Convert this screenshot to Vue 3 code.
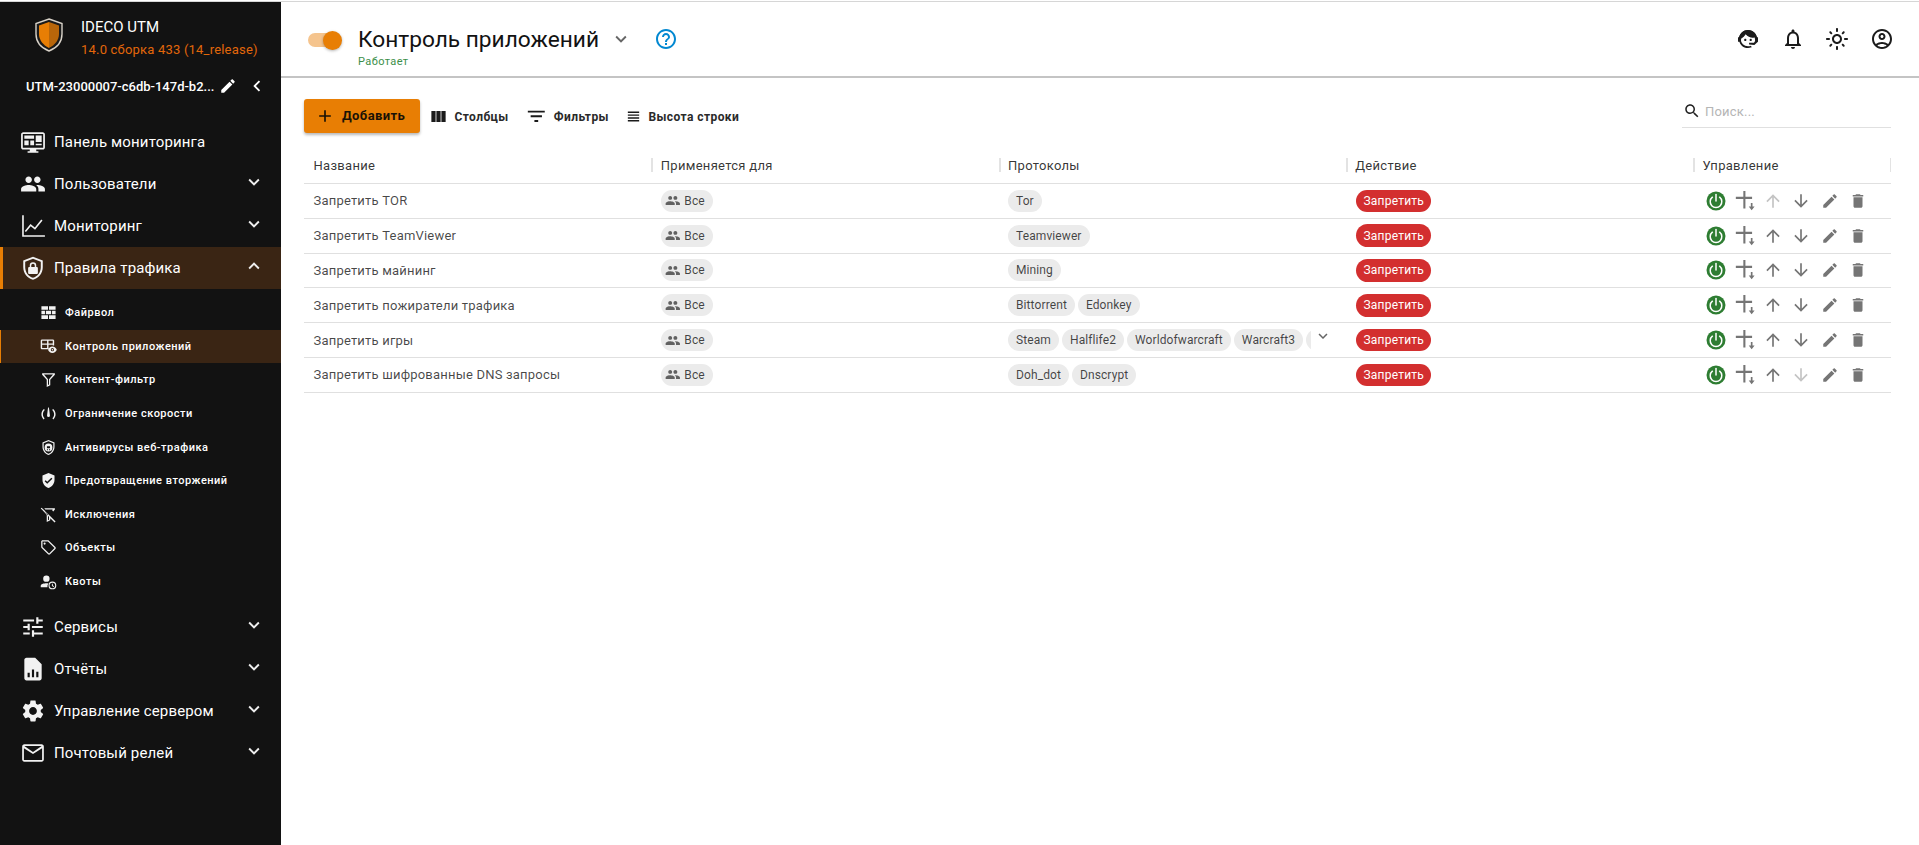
<script setup>
const P = {
  people: 'M16 11c1.66 0 2.99-1.34 2.99-3S17.66 5 16 5c-1.66 0-3 1.34-3 3s1.34 3 3 3zm-8 0c1.66 0 2.99-1.34 2.99-3S9.66 5 8 5C6.34 5 5 6.34 5 8s1.34 3 3 3zm0 2c-2.33 0-7 1.17-7 3.5V19h14v-2.5c0-2.33-4.67-3.5-7-3.5zm8 0c-.29 0-.62.02-.97.05 1.16.84 1.97 1.97 1.97 3.45V19h6v-2.5c0-2.33-4.67-3.5-7-3.5z',
  monitor: 'M21 3H3c-1.1 0-2 .9-2 2v12c0 1.1.9 2 2 2h6v1.5H7V22h10v-1.5h-2V19h6c1.1 0 2-.9 2-2V5c0-1.1-.9-2-2-2zm.4 14.4H2.6V4.6h18.8v12.8zM4 6h9v3H4zm10.5 0H20v6h-5.5zM4 10.5h4V15H4zm5.5 0H13V15H9.5zm5 3H20V15h-5.5z',
  chart: 'M2 2h1.5v18.5H23V22H2zM5.5 17.5l-1.1-1 5.3-6.3 4 3.2 5.9-7.3 1.2.9-6.9 8.5-4-3.2z',
  shieldlock: 'M12 1.6 3 5v6.3c0 5.4 3.8 10.2 9 11.5 5.200-1.300 9-6.100 9-11.500V5l-9-3.400zm7.200 9.700c0 4.500-3 8.600-7.200 9.800-4.200-1.200-7.200-5.300-7.200-9.800V6.300L12 3.500l7.200 2.800v5zM15.500 11H15V9.600a3 3 0 0 0-6 0V11h-.5a1 1 0 0 0-1 1v4.500a1 1 0 0 0 1 1h7a1 1 0 0 0 1-1V12a1 1 0 0 0-1-1zm-1.900 0h-3.200V9.600a1.600 1.600 0 0 1 3.200 0V11z',
  tune: 'M3 17v2h6v-2H3zM3 5v2h10V5H3zm10 16v-2h8v-2h-8v-2h-2v6h2zM7 9v2H3v2h4v2h2V9H7zm14 4v-2H11v2h10zm-6-4h2V7h4V5h-4V3h-2v6z',
  report: 'M14 1.500H6c-1.100 0-2 .9-2 2v17c0 1.100.9 2 2 2h12c1.100 0 2-.9 2-2V7.500l-6-6zM9 19.500H7v-4h2v4zm4 0h-2v-7h2v7zm4 0h-2v-5h2v5z',
  gear: 'M19.140 12.940c.04-.3.06-.61.06-.94 0-.32-.02-.64-.07-.94l2.030-1.580c.18-.14.23-.41.12-.61l-1.920-3.320c-.12-.22-.37-.29-.59-.22l-2.390.96c-.5-.38-1.030-.7-1.620-.94l-.36-2.540c-.04-.24-.24-.41-.48-.41h-3.840c-.24 0-.43.17-.47.41l-.36 2.540c-.59.24-1.130.57-1.620.94l-2.390-.96c-.22-.08-.47 0-.59.22L2.740 8.870c-.12.21-.08.47.12.61l2.030 1.580c-.05.3-.09.63-.09.94s.02.64.07.94l-2.030 1.580c-.18.14-.23.41-.12.61l1.920 3.320c.12.22.37.29.59.22l2.390-.96c.5.38 1.030.7 1.620.94l.36 2.540c.05.24.24.41.48.41h3.840c.24 0 .44-.17.47-.41l.36-2.540c.59-.24 1.130-.56 1.620-.94l2.390.96c.22.08.47 0 .59-.22l1.920-3.320c.12-.22.07-.47-.12-.61l-2.010-1.580zM12 15.600c-1.980 0-3.600-1.620-3.600-3.600s1.620-3.600 3.600-3.600 3.600 1.620 3.600 3.600-1.620 3.600-3.600 3.600z',
  mail: 'M20 4H4c-1.100 0-1.990.9-1.990 2L2 18c0 1.100.9 2 2 2h16c1.100 0 2-.9 2-2V6c0-1.100-.9-2-2-2zm.4 14.400H3.600V7.600l8.400 5.400 8.400-5.400v10.800zM12 11 4 5.600h16L12 11z',
  down: 'M7.410 8.590 12 13.170l4.590-4.580L18 10l-6 6-6-6 1.410-1.410z',
  up: 'M7.410 15.410 12 10.830l4.590 4.580L18 14l-6-6-6 6z',
  left: 'M15.410 7.410 14 6l-6 6 6 6 1.410-1.410L10.830 12z',
  edit: 'M3 17.250V21h3.750L17.810 9.940l-3.750-3.750L3 17.250zM20.710 7.040c.39-.39.39-1.020 0-1.410l-2.340-2.340c-.39-.39-1.020-.39-1.410 0l-1.830 1.830 3.750 3.750 1.830-1.830z',
  trash: 'M6 19c0 1.100.9 2 2 2h8c1.100 0 2-.9 2-2V7H6v12zM19 4h-3.500l-1-1h-5l-1 1H5v2h14V4z',
  arrowUp: 'M4 12l1.410 1.410L11 7.830V20h2V7.830l5.580 5.590L20 12l-8-8-8 8z',
  arrowDown: 'M20 12l-1.410-1.410L13 16.170V4h-2v12.170l-5.580-5.590L4 12l8 8 8-8z',
  search: 'M15.500 14h-.79l-.28-.27C15.410 12.590 16 11.110 16 9.500 16 5.910 13.090 3 9.500 3S3 5.910 3 9.500 5.910 16 9.500 16c1.610 0 3.090-.59 4.230-1.570l.27.28v.79l5 4.990L20.490 19l-4.990-5zm-6 0C7.010 14 5 11.990 5 9.500S7.010 5 9.500 5 14 7.010 14 9.500 11.990 14 9.500 14z',
  columns: 'M14.670 5v14H9.330V5h5.340zm1 14H21V5h-5.330v14zm-7.340 0V5H3v14h5.330z',
  filter: 'M10 18h4v-2h-4v2zM3 6v2h18V6H3zm3 7h12v-2H6v2z',
  density: 'M4 15h16v-2H4v2zm0 4h16v-2H4v2zm0-8h16V9H4v2zm0-6v2h16V5H4z',
  plus: 'M19 13h-6v6h-2v-6H5v-2h6V5h2v6h6v2z',
  help: 'M11 18h2v-2h-2v2zm1-16C6.480 2 2 6.480 2 12s4.480 10 10 10 10-4.480 10-10S17.520 2 12 2zm0 18c-4.410 0-8-3.590-8-8s3.590-8 8-8 8 3.590 8 8-3.590 8-8 8zm0-14c-2.210 0-4 1.790-4 4h2c0-1.100.9-2 2-2s2 .9 2 2c0 2-3 1.750-3 5h2c0-2.250 3-2.500 3-5 0-2.210-1.790-4-4-4z',
  bell: 'M12 22c1.100 0 2-.9 2-2h-4c0 1.100.9 2 2 2zm6-6v-5c0-3.070-1.630-5.640-4.500-6.320V4c0-.83-.67-1.500-1.500-1.500s-1.500.67-1.500 1.500v.68C7.640 5.360 6 7.920 6 11v5l-2 2v1h16v-1l-2-2zm-2 1H8v-6c0-2.480 1.510-4.500 4-4.500s4 2.020 4 4.500v6z',
  sun: 'M12 9c1.650 0 3 1.350 3 3s-1.350 3-3 3-3-1.350-3-3 1.350-3 3-3m0-2c-2.760 0-5 2.240-5 5s2.240 5 5 5 5-2.240 5-5-2.240-5-5-5zM2 13h2c.55 0 1-.45 1-1s-.45-1-1-1H2c-.55 0-1 .45-1 1s.45 1 1 1zm18 0h2c.55 0 1-.45 1-1s-.45-1-1-1h-2c-.55 0-1 .45-1 1s.45 1 1 1zM11 2v2c0 .55.45 1 1 1s1-.45 1-1V2c0-.55-.45-1-1-1s-1 .45-1 1zm0 18v2c0 .55.45 1 1 1s1-.45 1-1v-2c0-.55-.45-1-1-1s-1 .45-1 1zM5.990 4.580c-.39-.39-1.030-.39-1.410 0-.39.39-.39 1.030 0 1.410l1.060 1.060c.39.39 1.030.39 1.410 0s.39-1.030 0-1.410L5.990 4.580zm12.370 12.370c-.39-.39-1.030-.39-1.410 0-.39.39-.39 1.030 0 1.410l1.060 1.060c.39.39 1.030.39 1.410 0 .39-.39.39-1.030 0-1.410l-1.060-1.060zm1.060-10.960c.39-.39.39-1.030 0-1.410-.39-.39-1.030-.39-1.410 0l-1.060 1.060c-.39.39-.39 1.030 0 1.410s1.030.39 1.410 0l1.060-1.060zM7.050 18.360c.39-.39.39-1.030 0-1.410-.39-.39-1.030-.39-1.410 0l-1.060 1.060c-.39.39-.39 1.030 0 1.410s1.030.39 1.410 0l1.060-1.060z',
  account: 'M12 2C6.480 2 2 6.480 2 12s4.480 10 10 10 10-4.480 10-10S17.520 2 12 2zM7.350 18.500C8.660 17.560 10.260 17 12 17s3.340.56 4.650 1.500c-1.310.94-2.910 1.500-4.650 1.500s-3.340-.56-4.650-1.500zm10.790-1.380C16.450 15.800 14.320 15 12 15s-4.450.8-6.140 2.120C4.700 15.730 4 13.950 4 12c0-4.420 3.580-8 8-8s8 3.580 8 8c0 1.950-.7 3.730-1.860 5.120zM12 6c-1.930 0-3.500 1.570-3.500 3.500S10.070 13 12 13s3.500-1.570 3.500-3.500S13.930 6 12 6zm0 5c-.83 0-1.500-.67-1.500-1.500S11.170 8 12 8s1.500.67 1.500 1.500S12.830 11 12 11z',
  hair: 'M12 3C7.500 3 4.200 6.200 3 10.500V13.500H4.700C5 12.500 5.300 11.700 5.500 11.300 7.300 10.300 8.800 8.800 9.700 7.300 11.500 9.500 14 10.700 17 10.700 17.800 10.700 18.200 10.700 18.700 10.600 19 11.500 19 12.500 19 13.500H21V10.500C19.800 6.200 16.500 3 12 3Z',
  agent: 'M18.720 14.760C19.070 13.910 19.260 13 19.260 12C19.260 11.280 19.150 10.590 18.960 9.950C18.310 10.100 17.630 10.180 16.920 10.180C13.860 10.180 11.150 8.670 9.500 6.340C8.610 8.500 6.910 10.260 4.770 11.220C4.730 11.470 4.730 11.740 4.730 12A7.270 7.270 0 0 0 12 19.270C13.050 19.270 14.060 19.040 14.970 18.630C15.540 19.720 15.800 20.260 15.780 20.260C14.140 20.810 12.870 21.080 12 21.080C9.580 21.080 7.270 20.130 5.570 18.420C4.530 17.380 3.760 16.110 3.330 14.730H2V10.180H3.090C3.930 6.040 7.600 2.920 12 2.920C14.400 2.920 16.710 3.870 18.420 5.580C19.690 6.840 20.540 8.450 20.890 10.180H22V14.730H21.940L18.380 18L13.080 17.400V15.730H17.910L18.720 14.760M9.270 11.770C9.570 11.770 9.860 11.890 10.070 12.110C10.280 12.320 10.400 12.610 10.400 12.910C10.400 13.210 10.280 13.500 10.070 13.710C9.860 13.920 9.570 14.040 9.270 14.040C8.640 14.040 8.130 13.540 8.130 12.910C8.130 12.280 8.640 11.770 9.270 11.770M14.720 11.770C15.350 11.770 15.850 12.280 15.850 12.910C15.850 13.540 15.350 14.040 14.720 14.040C14.090 14.040 13.580 13.540 13.580 12.910A1.140 1.140 0 0 1 14.720 11.770Z',
  bricks: 'M2 3h9.300v5H2zM12.700 3H22v5h-9.300zM2 9.500h5v5H2zM8.300 9.500h7.400v5H8.300zM17 9.500h5v5h-5zM2 16h9.300v5H2zM12.700 16H22v5h-9.300z',
  appctl: 'M3 2h15c1.100 0 2 .9 2 2v6.500h-2V9.500h-6V14h.5v2H3c-1.100 0-2-.9-2-2V4c0-1.100.9-2 2-2zm0 2v3.700h7V4H3zm9 0v3.700h6V4h-6zM3 9.500V14h7V9.500H3zM17.500 12c3 0 5.200 2 6.200 4.500-1 2.500-3.200 4.500-6.200 4.500s-5.200-2-6.200-4.500c1-2.500 3.200-4.500 6.200-4.500zm0 2.200a2.300 2.300 0 1 0 0 4.600 2.300 2.300 0 0 0 0-4.600zm0 1.200a1.100 1.100 0 1 1 0 2.200 1.100 1.100 0 0 1 0-2.200z',
  funnel: 'M3 3h18v2.200l-6.500 7.300V20l-5 2.500v-10L3 5.200V3zm2.600 1.800 5.700 6.800v8l1.400-.7v-7.300l5.700-6.800H5.600z',
  gauge: 'M12 3c.6 0 1 2.500 1.400 6.500.2 2.300.6 4.500.6 5.500a2 2 0 0 1-4 0c0-1 .4-3.200.6-5.500C11 5.500 11.400 3 12 3zM5.500 5.500l1.400 1.400C5.100 8.400 4.100 10.500 4.100 13c0 2.300.9 4.400 2.400 5.800l-1.400 1.500C3.200 18.400 2 15.800 2 13c0-3 1.400-5.700 3.500-7.500zm13 0C20.600 7.300 22 10 22 13c0 2.800-1.200 5.400-3.100 7.300l-1.400-1.500c1.500-1.400 2.400-3.500 2.400-5.800 0-2.500-1-4.600-2.800-6.100l1.400-1.400z',
  shieldbug: 'M12 1.500 3.500 4.800v6.200c0 5.300 3.600 10.200 8.500 11.500 4.900-1.300 8.500-6.200 8.500-11.500V4.800L12 1.500zm6.800 9.500c0 4.400-2.900 8.600-6.800 9.800-3.900-1.200-6.800-5.400-6.800-9.800V6l6.800-2.700L18.800 6v5zM12 6.500a5.500 5.500 0 1 0 0 11 5.500 5.500 0 0 0 0-11zm-.7 9.300h-1.500v-1.300h1.500v1.300zm2.900 0h-1.500v-1.300h1.500v1.300zm0-2.700H9.800v-3h4.400v3z',
  shieldcheck: 'M12 1.500 3.500 4.800v6.200c0 5.300 3.600 10.200 8.500 11.500 4.900-1.300 8.500-6.200 8.500-11.500V4.800L12 1.500zm-1.800 15.200L6.500 13l1.500-1.500 2.200 2.200L16 8l1.500 1.500-7.300 7.200z',
  nofilter: 'M3 3h18v2l-2.300 2.600-1.400-1.400.5-1.400H7.600L6 3.300 3 3zM2.300 2.300 22 22l-1.400 1.400-6.100-6.100V20l-5 2.500v-10L3 5.200 1 3.700l1.300-1.400zm4.200 4.300 4.800 5.400v8l1.400-.7v-3.600L6.500 6.600z',
  tag: 'M12.600 2.300 21.700 11.400c.8.8.8 2 0 2.800l-7.500 7.500c-.8.8-2 .8-2.800 0L2.300 12.600c-.4-.4-.6-.9-.6-1.400V3.700c0-1.100.9-2 2-2h7.500c.5 0 1 .2 1.400.6zM3.500 3.500v7.700l9.300 9.300 7.700-7.700-9.300-9.300H3.500zM6.500 5a1.500 1.500 0 1 1 0 3 1.500 1.500 0 0 1 0-3z',
  quota: 'M9 3.500a4.500 4.500 0 1 1 0 9 4.500 4.500 0 0 1 0-9zM9 14.500c1 0 2 .1 2.900.3A7 7 0 0 0 10.500 20H1v-2c0-2.400 5.300-3.500 8-3.500zM17.500 12a5.500 5.500 0 1 1 0 11 5.500 5.500 0 0 1 0-11zm0 1.600a3.900 3.900 0 1 0 0 7.800 3.900 3.900 0 0 0 0-7.800zm-.7 1.400h1.300v2.500l1.900 1.100-.6 1.100-2.600-1.500V15z',
  addbelow: 'M1 7h9V0h2.500v7h8v2.500h-8V21H10V9.500H1zM19 14.500h2v4h2.500L20 23l-3.500-4.500H19z'
}

const topNav = [
  { icon: 'monitor', label: 'Панель мониторинга' },
  { icon: 'people', label: 'Пользователи', chevron: 'down' },
  { icon: 'chart', label: 'Мониторинг', chevron: 'down' },
  { icon: 'shieldlock', label: 'Правила трафика', chevron: 'up', active: true }
]
const subNav = [
  { icon: 'bricks', label: 'Файрвол' },
  { icon: 'appctl', label: 'Контроль приложений', active: true },
  { icon: 'funnel', label: 'Контент-фильтр' },
  { icon: 'gauge', label: 'Ограничение скорости' },
  { icon: 'shieldbug', label: 'Антивирусы веб-трафика' },
  { icon: 'shieldcheck', label: 'Предотвращение вторжений' },
  { icon: 'nofilter', label: 'Исключения' },
  { icon: 'tag', label: 'Объекты' },
  { icon: 'quota', label: 'Квоты' }
]
const bottomNav = [
  { icon: 'tune', label: 'Сервисы', chevron: 'down' },
  { icon: 'report', label: 'Отчёты', chevron: 'down' },
  { icon: 'gear', label: 'Управление сервером', chevron: 'down' },
  { icon: 'mail', label: 'Почтовый релей', chevron: 'down' }
]
const tools = [
  { icon: 'columns', label: 'Столбцы' },
  { icon: 'filter', label: 'Фильтры' },
  { icon: 'density', label: 'Высота строки' }
]
const columns = ['Название', 'Применяется для', 'Протоколы', 'Действие', 'Управление']
const rows = [
  { name: 'Запретить TOR', protocols: ['Tor'], upOff: true },
  { name: 'Запретить TeamViewer', protocols: ['Teamviewer'] },
  { name: 'Запретить майнинг', protocols: ['Mining'] },
  { name: 'Запретить пожиратели трафика', protocols: ['Bittorrent', 'Edonkey'] },
  { name: 'Запретить игры', protocols: ['Steam', 'Halflife2', 'Worldofwarcraft', 'Warcraft3'], more: true },
  { name: 'Запретить шифрованные DNS запросы', protocols: ['Doh_dot', 'Dnscrypt'], downOff: true }
]
</script>

<template>
  <div class="page">
    <div class="topline"></div>
    <div class="shell">
      <aside class="sidebar">
        <div class="brand">
          <svg class="logo" viewBox="0 0 28 34">
            <path d="M14 1 27 5.500V16c0 8-5.500 14-13 17C6.500 30 1 24 1 16V5.500z" fill="#1a1a1a" stroke="#d8d2c8" stroke-width="1.400" />
            <path d="M14 4 4 7.500V16c0 6 4 11 10 14z" fill="#e87e04" />
            <path d="M14 4 24 7.500V16c0 6-4 11-10 14z" fill="#b8660a" />
          </svg>
          <div class="brand-text">
            <div class="brand-name">IDECO UTM</div>
            <div class="brand-ver">14.0 сборка 433 (14_release)</div>
          </div>
        </div>
        <div class="host">
          <span class="host-name">UTM-23000007-c6db-147d-b2...</span>
          <svg class="host-edit" viewBox="0 0 24 24"><path :d="P.edit" /></svg>
          <svg class="host-back" viewBox="0 0 24 24"><path :d="P.left" /></svg>
        </div>
        <nav class="nav">
          <div v-for="item in topNav" :key="item.label" class="nav-item" :class="{ active: item.active }">
            <svg class="nav-icon" viewBox="0 0 24 24"><path :d="P[item.icon]" /></svg>
            <span class="nav-label">{{ item.label }}</span>
            <svg v-if="item.chevron" class="nav-chev" viewBox="0 0 24 24"><path :d="P[item.chevron]" /></svg>
          </div>
          <div class="sub">
            <div v-for="item in subNav" :key="item.label" class="sub-item" :class="{ active: item.active }">
              <svg class="sub-icon" viewBox="0 0 24 24"><path :d="P[item.icon]" fill-rule="evenodd" /></svg>
              <span class="sub-label">{{ item.label }}</span>
            </div>
          </div>
          <div v-for="item in bottomNav" :key="item.label" class="nav-item">
            <svg class="nav-icon" viewBox="0 0 24 24"><path :d="P[item.icon]" /></svg>
            <span class="nav-label">{{ item.label }}</span>
            <svg class="nav-chev" viewBox="0 0 24 24"><path :d="P[item.chevron]" /></svg>
          </div>
        </nav>
      </aside>

      <main class="main">
        <header class="header">
          <div class="toggle"><span class="track"></span><span class="thumb"></span></div>
          <div class="title-wrap">
            <div class="title-row">
              <h1 class="title">Контроль приложений</h1>
              <svg class="title-chev" viewBox="0 0 24 24"><path :d="P.down" /></svg>
              <svg class="title-help" viewBox="0 0 24 24"><path :d="P.help" /></svg>
            </div>
            <div class="status">Работает</div>
          </div>
          <div class="header-icons">
            <svg viewBox="0 0 24 24"><path :d="P.agent" /><path :d="P.hair" /></svg>
            <svg viewBox="0 0 24 24"><path :d="P.bell" /></svg>
            <svg viewBox="0 0 24 24"><path :d="P.sun" /></svg>
            <svg viewBox="0 0 24 24"><path :d="P.account" /></svg>
          </div>
        </header>

        <section class="content">
          <div class="toolbar">
            <button class="add" type="button">
              <svg viewBox="0 0 24 24"><path :d="P.plus" /></svg>
              <span>Добавить</span>
            </button>
            <div v-for="t in tools" :key="t.label" class="tool" :class="'tool-' + t.icon">
              <svg viewBox="0 0 24 24"><path :d="P[t.icon]" /></svg>
              <span>{{ t.label }}</span>
            </div>
            <div class="search">
              <svg viewBox="0 0 24 24"><path :d="P.search" /></svg>
              <span>Поиск...</span>
            </div>
          </div>

          <div class="table">
            <div class="thead grid">
              <div v-for="(c, i) in columns" :key="c" class="th" :class="{ sep: i > 0 }">{{ c }}</div>
            </div>
            <div v-for="r in rows" :key="r.name" class="tr grid">
              <div class="td name">{{ r.name }}</div>
              <div class="td">
                <span class="chip chip-all">
                  <svg viewBox="0 0 24 24"><path :d="P.people" /></svg>Все
                </span>
              </div>
              <div class="td protos">
                <div class="proto-list">
                  <span v-for="p in r.protocols" :key="p" class="chip">{{ p }}</span>
                  <span v-if="r.more" class="chip chip-clip"></span>
                </div>
                <svg v-if="r.more" class="more" viewBox="0 0 24 24"><path :d="P.down" /></svg>
              </div>
              <div class="td td-deny"><span class="deny">Запретить</span></div>
              <div class="td actions">
                <span class="act">
                  <svg class="power" viewBox="0 0 20 20">
                    <circle cx="10" cy="10" r="9.500" fill="#2e7d32" />
                    <path d="M6.400 6.200a5.800 5.800 0 1 0 7.200 0" fill="none" stroke="#fff" stroke-width="1.500" stroke-linecap="round" />
                    <path d="M10 3.500v6.500" stroke="#fff" stroke-width="1.500" stroke-linecap="round" />
                  </svg>
                </span>
                <span class="act"><svg viewBox="0 0 24 24"><path :d="P.addbelow" /></svg></span>
                <span class="act" :class="{ off: r.upOff }"><svg viewBox="0 0 24 24"><path :d="P.arrowUp" /></svg></span>
                <span class="act" :class="{ off: r.downOff }"><svg viewBox="0 0 24 24"><path :d="P.arrowDown" /></svg></span>
                <span class="act"><svg class="sm" viewBox="0 0 24 24"><path :d="P.edit" /></svg></span>
                <span class="act"><svg class="sm" viewBox="0 0 24 24"><path :d="P.trash" /></svg></span>
              </div>
            </div>
          </div>
        </section>
      </main>
    </div>
  </div>
</template>

<style>
html, body { margin: 0; padding: 0; background: #fff; overflow: hidden; }
</style>

<style scoped>
* { box-sizing: border-box; }
.page {
  width: 1919px;
  height: 845px;
  display: flex;
  flex-direction: column;
  font-family: Roboto, "Noto Sans", sans-serif;
  background: #fff;
  overflow: hidden;
}
.topline { height: 2px; background: #d6d6d6; border-top: 1px solid #fff; flex: none; }
.shell { flex: 1; display: flex; min-height: 0; }

/* sidebar */
.sidebar { width: 281px; flex: none; background: #121212; color: #fff; }
.brand { display: flex; align-items: center; padding: 16px 0 0 35px; height: 50px; }
.logo { width: 28px; height: 34px; flex: none; }
.brand-text { margin-left: 18px; margin-top: 6px; }
.brand-name { font-size: 15px; line-height: 23px; font-weight: 400; }
.brand-ver { font-size: 13px; line-height: 21px; color: #e2670a; letter-spacing: .2px; }
.host { display: flex; align-items: center; height: 24px; margin-top: 22px; padding-left: 26px; }
.host-name { width: 191px; font-size: 13px; font-weight: 500; white-space: nowrap; overflow: hidden; }
.host-edit { width: 18px; height: 18px; fill: #fff; margin-left: 2px; }
.host-back { width: 22px; height: 22px; fill: #fff; margin-left: 9px; }
.nav { margin-top: 23px; }
.nav-item { position: relative; display: flex; align-items: center; height: 42px; padding-left: 20px; }
.nav-item.active { background: #3a2514; }
.nav-item.active::before { content: ""; position: absolute; left: 0; top: 0; bottom: 0; width: 3px; background: #e87e04; }
.nav-icon { width: 26px; height: 26px; fill: #f2f2f2; flex: none; margin-top: -1px; }
.nav-label { margin-left: 8px; font-size: 15px; font-weight: 400; letter-spacing: .15px; white-space: nowrap; flex: 1; }
.nav-chev { width: 22px; height: 22px; fill: #eee; margin-right: 16px; margin-top: -4px; flex: none; }
.sub { padding: 7px 0 8px; }
.sub-item { position: relative; display: flex; align-items: center; height: 33.6px; padding-left: 40px; }
.sub-item.active { background: #3a2514; }
.sub-item.active::before { content: ""; position: absolute; left: 0; top: 0; bottom: 0; width: 1px; background: #e87e04; }
.sub-icon { width: 17px; height: 17px; fill: #f2f2f2; flex: none; }
.sub-label { margin-left: 8px; font-size: 11px; font-weight: 500; letter-spacing: .5px; white-space: nowrap; }

/* header */
.main { flex: 1; min-width: 0; display: flex; flex-direction: column; }
.header { height: 76px; flex: none; display: flex; align-items: flex-start; border-bottom: 2px solid #c4c4c4; padding-left: 27px; position: relative; }
.toggle { position: relative; width: 34px; height: 20px; margin-top: 28px; flex: none; }
.track { position: absolute; left: 0; right: 3px; top: 3px; height: 14px; border-radius: 7px; background: #f5c48d; }
.thumb { position: absolute; right: 0; top: 1px; width: 19px; height: 19px; border-radius: 50%; background: #e87e04; box-shadow: 0 1px 3px rgba(0,0,0,.3); }
.title-wrap { margin-left: 16px; margin-top: 21px; }
.title-row { display: flex; align-items: center; height: 32px; }
.title { margin: 0; font-size: 22.7px; line-height: 32px; font-weight: 400; color: #121212; white-space: nowrap; position: relative; top: 1px; }
.title-chev { width: 22px; height: 22px; fill: #666; margin-left: 11px; flex: none; }
.title-help { width: 24px; height: 24px; fill: #0288d1; margin-left: 22px; flex: none; }
.status { font-size: 11px; line-height: 13px; color: #3c8f4a; letter-spacing: .4px; }
.header-icons { margin-left: auto; display: flex; align-items: center; height: 24px; margin-top: 25px; margin-right: 25px; gap: 20.700px; }
.header-icons svg { width: 24px; height: 24px; fill: #1c1c1c; }

/* toolbar */
.content { padding: 0 28px 0 23px; }
.toolbar { display: flex; align-items: center; height: 34px; margin-top: 21px; position: relative; }
.add {
  width: 116px; height: 34px; border: 0; border-radius: 3px; background: #e87e04; color: #1a1206;
  display: flex; align-items: center; padding: 0 0 0 11px;
  box-shadow: 0 2px 3px rgba(0,0,0,.28); font-family: inherit;
  font-size: 13px; font-weight: 700; letter-spacing: .4px;
}
.add svg { width: 20px; height: 20px; fill: #1a1206; }
.add span { margin-left: 7px; margin-top: -2px; }
.tool { display: flex; align-items: center; gap: 6.5px; font-size: 12px; font-weight: 700; letter-spacing: .42px; color: #2a2a2a; white-space: nowrap; margin-left: 16px; }
.tool span { margin-top: 1px; }
.tool svg { fill: #1a1a1a; flex: none; }
.tool-columns { margin-left: 9px; }
.tool-columns svg { width: 19px; height: 19px; }
.tool-filter svg { width: 22.6px; height: 22.6px; }
.tool-density svg { width: 17px; height: 17px; }
.search { margin-left: auto; width: 209px; height: 33px; display: flex; align-items: center; padding-left: 1px; border-bottom: 1px solid #e0e0e0; margin-top: -9px; font-size: 13px; color: #b5b5b5; }
.search svg { width: 18px; height: 18px; fill: #222; margin-right: 4px; }
.search span { letter-spacing: .2px; }

/* table */
.table { margin-top: 15px; }
.grid { display: grid; grid-template-columns: 347.250px 347.250px 347.250px 347.250px 1fr; }
.thead { height: 36px; border-bottom: 1px solid #e0e0e0; }
.th { position: relative; display: flex; align-items: center; padding-left: 9.500px; font-size: 13px; font-weight: 400; letter-spacing: .3px; color: rgba(0,0,0,.8); }
.th.sep::before { content: ""; position: absolute; left: 0; top: 10px; height: 14px; width: 2px; background: #e3e3e3; }
.th:last-child::after { content: ""; position: absolute; right: 0; top: 10px; height: 14px; width: 1px; background: #e3e3e3; }
.tr { height: 34.800px; border-bottom: 1px solid #e0e0e0; }
.td { display: flex; align-items: center; padding-left: 9.500px; min-width: 0; }
.td-deny { padding-left: 10.500px; }
.name { font-size: 13px; letter-spacing: .2px; color: rgba(0,0,0,.72); white-space: nowrap; }
.chip { display: inline-flex; align-items: center; height: 22px; padding: 0 8px; border-radius: 11px; background: #ebebeb; font-size: 12px; letter-spacing: .1px; color: rgba(0,0,0,.72); white-space: nowrap; flex: none; }
.chip-all { padding-left: 4px; width: 52px; }
.chip-all svg { width: 17px; height: 17px; fill: #616161; margin-right: 4px; }
.chip-clip { width: 40px; }
.protos { position: relative; }
.proto-list { display: flex; gap: 3px; width: 303px; overflow: hidden; }
.more { position: absolute; left: 315px; top: 4px; width: 18px; height: 18px; fill: #666; }
.deny { display: inline-flex; align-items: center; justify-content: center; height: 22.500px; width: 75px; border-radius: 12px; background: #d32f2f; color: #fff; font-size: 12px; letter-spacing: .2px; }
.actions { padding-left: 9px; }
.act { width: 28.400px; height: 24px; display: flex; align-items: center; justify-content: center; flex: none; }
.act svg { width: 20px; height: 20px; fill: #757575; }
.act svg.sm { width: 18px; height: 18px; }
.act.off svg { fill: #c4c4c4; }
</style>
